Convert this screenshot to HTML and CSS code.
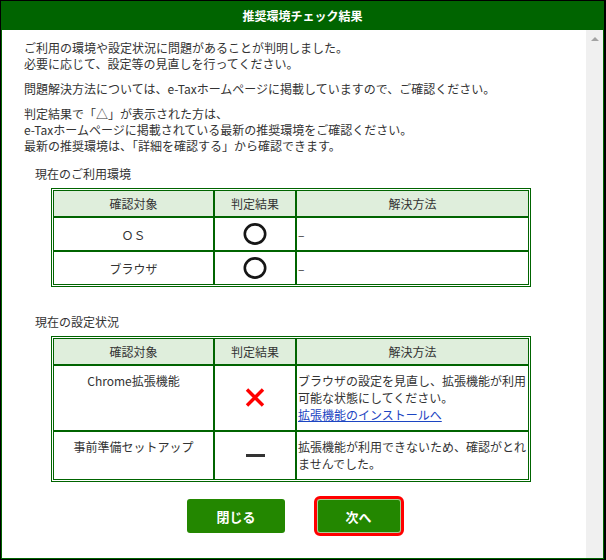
FILE: index.html
```html
<!DOCTYPE html>
<html lang="ja">
<head>
  <meta charset="UTF-8" />
  <meta name="viewport" content="width=device-width, initial-scale=1" />
  <title>推奨環境チェック結果</title>
  <link rel="stylesheet" href="styles.css">
</head>
<body>

  <div class="window">
    <div class="dialog">
      <header class="dialog-title">推奨環境チェック結果</header>

      <div class="dialog-body">
        <main class="content">
          <p class="msg">ご利用の環境や設定状況に問題があることが判明しました。<br>必要に応じて、設定等の見直しを行ってください。</p>
          <p class="msg">問題解決方法については、e-Taxホームページに掲載していますので、ご確認ください。</p>
          <p class="msg">判定結果で「△」が表示された方は、<br>e-Taxホームページに掲載されている最新の推奨環境をご確認ください。<br>最新の推奨環境は、「詳細を確認する」から確認できます。</p>

          <!-- ご利用環境 -->
          <p class="section-label">現在のご利用環境</p>
          <table class="check-table">
            <tr>
              <th class="col-target">確認対象</th>
              <th class="col-result">判定結果</th>
              <th>解決方法</th>
            </tr>
            <tr class="row-env">
              <td class="cell-target">ＯＳ</td>
              <td class="cell-result">
                <svg class="mark" width="24" height="22" viewBox="0 0 24 22"><ellipse cx="12" cy="11" rx="10.2" ry="9.6" fill="none" stroke="#161616" stroke-width="2.6"/></svg>
              </td>
              <td class="cell-solution">–</td>
            </tr>
            <tr class="row-env">
              <td class="cell-target">ブラウザ</td>
              <td class="cell-result">
                <svg class="mark" width="24" height="22" viewBox="0 0 24 22"><ellipse cx="12" cy="11" rx="10.2" ry="9.6" fill="none" stroke="#161616" stroke-width="2.6"/></svg>
              </td>
              <td class="cell-solution">–</td>
            </tr>
          </table>

          <!-- 設定状況 -->
          <p class="section-label">現在の設定状況</p>
          <table class="check-table">
            <tr>
              <th class="col-target">確認対象</th>
              <th class="col-result">判定結果</th>
              <th>解決方法</th>
            </tr>
            <tr>
              <td class="cell-target top">Chrome拡張機能</td>
              <td class="cell-result">
                <svg class="mark" width="20" height="19" viewBox="0 0 20 19"><path d="M2 1.5 L18 17.5 M18 1.5 L2 17.5" stroke="#ff0000" stroke-width="3.4"/></svg>
              </td>
              <td class="cell-solution top">ブラウザの設定を見直し、拡張機能が利用可能な状態にしてください。<br><a href="#">拡張機能のインストールへ</a></td>
            </tr>
            <tr>
              <td class="cell-target top">事前準備セットアップ</td>
              <td class="cell-result"><span class="mark-none"></span></td>
              <td class="cell-solution top">拡張機能が利用できないため、確認がとれませんでした。</td>
            </tr>
          </table>

          <div class="actions">
            <button type="button" class="btn">閉じる</button>
            <button type="button" class="btn btn-focus">次へ</button>
          </div>
        </main>

        <div class="scrollbar"><span class="scroll-up"></span></div>
      </div>
    </div>
  </div>

</body>
</html>
```

FILE: styles.css
```css
html, body {
  margin: 0;
  padding: 0;
  background-color: #fff;
}
body {
  font-family: "Noto Sans CJK JP", "Noto Sans", sans-serif;
  font-size: 12px;
  color: #333;
}
.window {
  box-sizing: border-box;
  width: 606px;
  height: 560px;
  border: 1px solid #000;
  border-right-width: 2px;
}
.dialog {
  box-sizing: border-box;
  height: 100%;
  border: 1px solid #006400;
  display: flex;
  flex-direction: column;
}
.dialog-title {
  height: 28px;
  line-height: 28px;
  background-color: #006400;
  color: #fff;
  font-weight: bold;
  text-align: center;
}
.dialog-body {
  flex: 1;
  display: flex;
  min-height: 0;
}
.content {
  flex: 1;
  padding: 10px 22px 0;
  overflow: hidden;
}
.scrollbar {
  width: 17px;
  background-color: #f0f0f0;
}
.scroll-up {
  display: block;
  width: 0;
  height: 0;
  margin: 7px auto 0;
  border-left: 4px solid transparent;
  border-right: 4px solid transparent;
  border-bottom: 4px solid #a3a3a3;
}
.msg {
  margin: 0 0 9px;
  line-height: 16px;
}
.section-label {
  margin: 12px 0 6px 11px;
  line-height: 16px;
}
.check-table {
  box-sizing: border-box;
  width: 480px;
  margin: 0 0 27px 27px;
  table-layout: fixed;
  border: 1px solid #006400;
  border-spacing: 0;
  padding: 1px;
}
.check-table th,
.check-table td {
  border: 1px solid #006400;
  line-height: 17px;
  padding: 6px 1px 7px;
  vertical-align: middle;
}
.check-table th {
  background-color: #dfeedc;
  font-weight: normal;
  padding: 4px 1px;
  text-align: center;
}
.col-target {
  width: 157px;
}
.col-result {
  width: 78px;
}
.cell-target {
  text-align: center;
}
.cell-result {
  text-align: center;
}
.cell-solution {
  text-align: left;
}
.check-table td.top {
  vertical-align: top;
}
.row-env td {
  padding: 5px 1px;
}
.mark {
  display: block;
  margin: 0 auto;
}
.mark-none {
  display: block;
  width: 19px;
  height: 3px;
  margin: 0 auto;
  background-color: #333;
}
.check-table a {
  color: #1c45c2;
  text-decoration: underline;
}
.actions {
  display: flex;
  justify-content: center;
  gap: 32px;
  margin-top: -10px;
}
.btn {
  height: 34px;
  padding: 0 29px;
  border: none;
  border-radius: 3px;
  background-color: #238700;
  color: #fff;
  font-family: inherit;
  font-size: 13px;
  font-weight: bold;
  cursor: pointer;
}
.btn-focus {
  outline: 3px solid #ff0000;
  box-shadow: inset 0 0 0 1px rgba(255, 255, 255, 0.6);
}
```
